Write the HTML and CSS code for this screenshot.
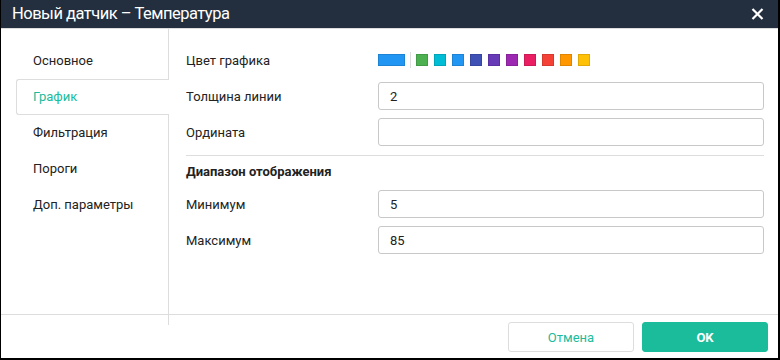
FILE: index.html
```html
<!DOCTYPE html>
<html lang="ru">
<head>
    <meta charset="UTF-8">
    <title>Новый датчик</title>
    <link rel="stylesheet" href="styles.css">
</head>
<body>
    <div class="dialog">
        <div class="titlebar">
            <span class="title">Новый датчик – Температура</span>
            <svg class="close" width="13" height="12" viewBox="0 0 13 12">
                <path d="M1.5 1 L11.5 11 M11.5 1 L1.5 11" stroke="#fff" stroke-width="2.2" fill="none"/>
            </svg>
        </div>
        <div class="main">
            <ul class="tabs">
                <li class="tab">Основное</li>
                <li class="tab active">График</li>
                <li class="tab">Фильтрация</li>
                <li class="tab">Пороги</li>
                <li class="tab">Доп. параметры</li>
            </ul>
            <div class="content">
                <div class="row">
                    <label>Цвет графика</label>
                    <div class="colors">
                        <span class="swatch current" style="background:#2196f3"></span>
                        <span class="sep"></span>
                        <span class="swatch" style="background:#4caf50"></span>
                        <span class="swatch" style="background:#00bcd4"></span>
                        <span class="swatch" style="background:#2196f3"></span>
                        <span class="swatch" style="background:#3f51b5"></span>
                        <span class="swatch" style="background:#673ab7"></span>
                        <span class="swatch" style="background:#9c27b0"></span>
                        <span class="swatch" style="background:#e91e63"></span>
                        <span class="swatch" style="background:#f44336"></span>
                        <span class="swatch" style="background:#ff9800"></span>
                        <span class="swatch" style="background:#ffc107"></span>
                    </div>
                </div>
                <div class="row">
                    <label>Толщина линии</label>
                    <input class="field" type="text" value="2">
                </div>
                <div class="row">
                    <label>Ордината</label>
                    <input class="field" type="text" value="">
                </div>
                <div class="divider"></div>
                <div class="section">Диапазон отображения</div>
                <div class="row">
                    <label>Минимум</label>
                    <input class="field" type="text" value="5">
                </div>
                <div class="row">
                    <label>Максимум</label>
                    <input class="field" type="text" value="85">
                </div>
            </div>
        </div>
        <div class="footer">
            <button class="btn cancel">Отмена</button>
            <button class="btn ok">OK</button>
        </div>
    </div>
</body>
</html>
```

FILE: styles.css
```css
*{
    box-sizing: border-box;
}
body{
    margin: 0;
    font-family: Roboto, "Liberation Sans", sans-serif;
    font-size: 13px;
    color: #222;
}
.dialog{
    width: 780px;
    height: 360px;
    display: flex;
    flex-direction: column;
    border-left: 1px solid #000;
    border-right: 2px solid #000;
    border-bottom: 2px solid #000;
    background: #fff;
}
.titlebar{
    height: 29px;
    flex: none;
    display: flex;
    align-items: center;
    justify-content: space-between;
    padding: 0 14px 0 11px;
    background: #232f3e;
    border-bottom: 1px solid #ddd;
    color: #fff;
}
.title{
    font-size: 16.5px;
    letter-spacing: -0.5px;
    line-height: 28px;
}
.close{
    display: block;
    margin-top: -1px;
}
.main{
    flex: 1;
    display: flex;
}
.tabs{
    list-style: none;
    margin: 0;
    padding: 14px 0 0 0;
    width: 168px;
    flex: none;
    border-right: 1px solid #ddd;
    position: relative;
}
.tabs::after{
    content: "";
    position: absolute;
    right: -1px;
    bottom: -11px;
    width: 1px;
    height: 11px;
    background: #ddd;
}
.tab{
    height: 36px;
    line-height: 34px;
    margin-left: 15px;
    margin-right: -1px;
    padding-left: 16px;
    border: 1px solid transparent;
    border-right: none;
    border-radius: 3px 0 0 3px;
}
.tab.active{
    color: #1abc9c;
    background: #fff;
    border-color: #ddd;
    position: relative;
}
.content{
    flex: 1;
    padding: 13px 14px 0 17px;
}
.row{
    height: 36px;
    display: flex;
    align-items: center;
}
.row label{
    width: 192px;
    flex: none;
}
.colors{
    display: flex;
    align-items: center;
    gap: 6px;
}
.swatch{
    width: 12px;
    height: 12px;
    border: 1px solid rgba(0,0,0,0.12);
}
.swatch.current{
    width: 27px;
}
.sep{
    width: 1px;
    height: 16px;
    background: #ddd;
    margin: 0 -1px 0 -1px;
}
.field{
    flex: 1;
    height: 28px;
    border: 1px solid #c8c8c8;
    border-radius: 3px;
    padding: 0 11px;
    font-family: inherit;
    font-size: 13px;
    color: #222;
    outline: none;
}
.divider{
    height: 1px;
    background: #ddd;
    margin-top: 5px;
}
.section{
    height: 30px;
    line-height: 31px;
    font-weight: bold;
}
.footer{
    height: 44px;
    flex: none;
    border-top: 1px solid #ddd;
    display: flex;
    justify-content: flex-end;
    align-items: flex-start;
    gap: 8px;
    padding: 7px 10px 0 0;
}
.btn{
    width: 126px;
    height: 30px;
    border-radius: 3px;
    font-family: inherit;
    font-size: 13px;
    cursor: pointer;
}
.btn.cancel{
    background: #fff;
    border: 1px solid #ddd;
    color: #1abc9c;
}
.btn.ok{
    background: #1abc9c;
    border: 1px solid #1abc9c;
    color: #fff;
    font-weight: bold;
}
```
